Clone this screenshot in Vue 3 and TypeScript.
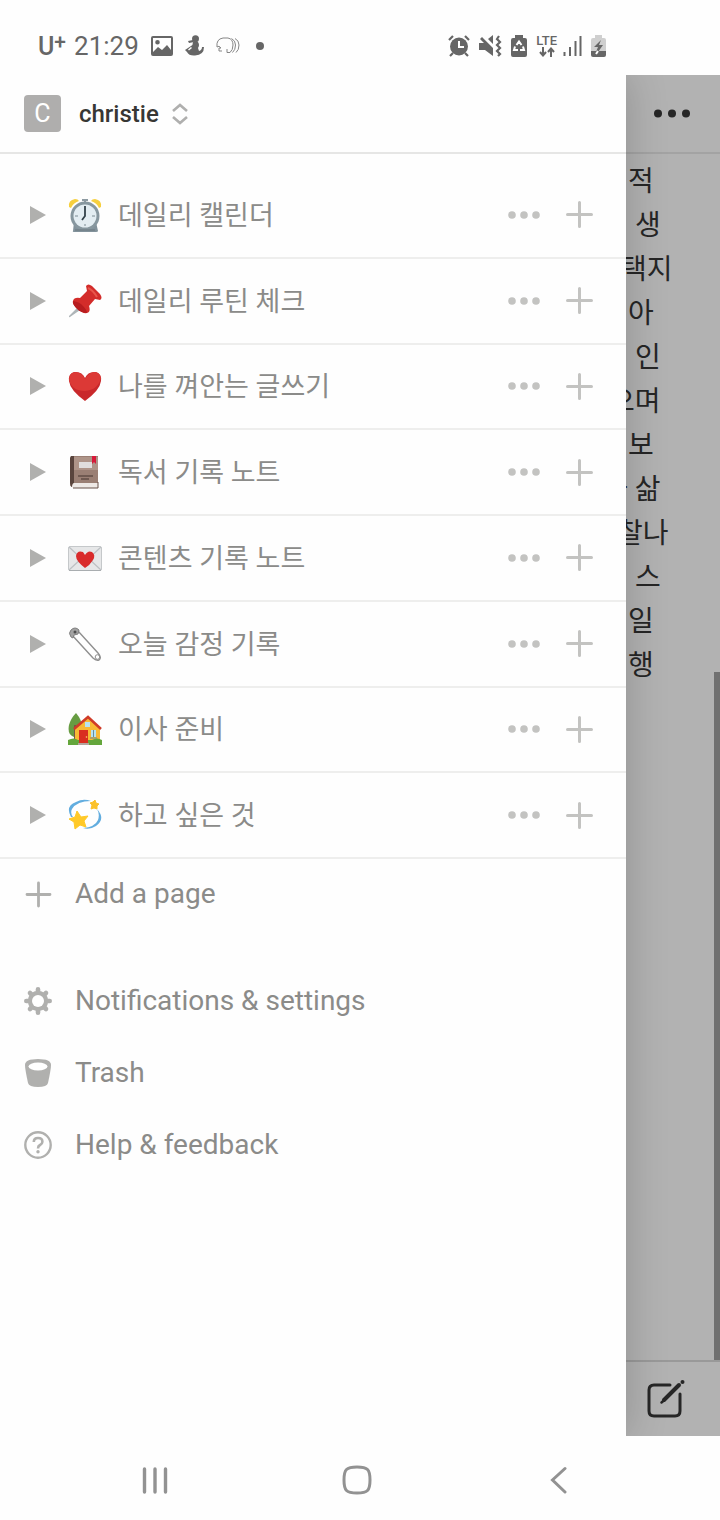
<script setup lang="ts">
type Page = { icon: string; title: string }
type Line = { text: string; shift: number }

const pages: Page[] = [
  { icon: 'clock', title: '데일리 캘린더' },
  { icon: 'pin', title: '데일리 루틴 체크' },
  { icon: 'heart', title: '나를 껴안는 글쓰기' },
  { icon: 'book', title: '독서 기록 노트' },
  { icon: 'letter', title: '콘텐츠 기록 노트' },
  { icon: 'safety-pin', title: '오늘 감정 기록' },
  { icon: 'house', title: '이사 준비' },
  { icon: 'dizzy', title: '하고 싶은 것' },
]

// shift: how far a line runs under the drawer
const lines: Line[] = [
  { text: '적', shift: 0 },
  { text: ' 생', shift: 0 },
  { text: '택지', shift: 7 },
  { text: '아', shift: 0 },
  { text: ' 인', shift: 0 },
  { text: '으며', shift: 19 },
  { text: '보', shift: 0 },
  { text: '과 삶', shift: 26 },
  { text: '찰나', shift: 11 },
  { text: ' 스', shift: 0 },
  { text: '일', shift: 0 },
  { text: '행', shift: 0 },
]
</script>

<template>
  <div class="screen">
    <header class="status">
      <div class="status-left">
        <span class="carrier">U<sup>+</sup></span>
        <time class="time">21:29</time>
        <svg class="s-image" width="22" height="20" viewBox="0 0 22 20">
          <path fill="#666" fill-rule="evenodd" d="M2 0h18a2 2 0 0 1 2 2v16a2 2 0 0 1-2 2H2a2 2 0 0 1-2-2V2a2 2 0 0 1 2-2zM2 2v14l5-5 4 3 5-5 4 5V2zM6.500 4a2.300 2.300 0 1 1 0 4.600a2.300 2.300 0 0 1 0-4.600z" />
        </svg>
        <svg class="s-person" width="19" height="21" viewBox="0 0 19 21">
          <circle cx="10.500" cy="3.700" r="3.500" fill="#666" />
          <path fill="#666" d="m3 6 5-1 1 2-5 1zM8 7h5q2 3 0 6l1 3q3-1 3-4h2q0 8-9 8.500-6 .5-8-3.500l-2-2 6-4q2-1 2-4z" />
          <path d="m3.500 15 3-2.500" stroke="#fff" stroke-width="1.500" />
        </svg>
        <svg class="s-elephant" width="24" height="17" viewBox="0 0 24 17" fill="none" stroke="#858585" stroke-width="1">
          <path d="M1 10q-1-8 6-9h5q5 1 5 7 0 5-3 7.500h-3V12M1 10q2-2 4 1H3v3h3" />
          <path d="M15.500 1.500q4 2 4 6.500 0 5-3 7.500M19 1.500q4 2 4 6.500 0 5-3 7.500" />
        </svg>
        <svg class="s-dot" width="8" height="8" viewBox="0 0 8 8"><circle cx="4" cy="4" r="4" fill="#666" /></svg>
      </div>
      <div class="status-right">
        <svg width="22" height="22" viewBox="0 0 22 22">
          <circle cx="11" cy="11.500" r="9" fill="#666" />
          <path d="M1 5 5 1M21 5l-4-4M5 18l-3 3M17 18l3 3" stroke="#666" stroke-width="2.200" fill="none" />
          <path d="M11 6v6h5" stroke="#fff" stroke-width="2" fill="none" />
        </svg>
        <svg width="23" height="22" viewBox="0 0 23 22">
          <path fill="#666" d="M0 8h6l8 9v4l-8-6H0zM9 4l5-4v9zM3 2 14 13v4L1 4z" />
          <path d="m20 1-2 3 3 3-3 3 3 3-3 3 3 3-2 2" stroke="#666" stroke-width="2.200" fill="none" />
        </svg>
        <svg width="16" height="22" viewBox="0 0 16 22">
          <path fill="#666" d="M4 0h8v3h2q2 0 2 2v15q0 2-2 2H2q-2 0-2-2V5q0-2 2-2h2z" />
          <path d="m5.500 10 2.500-3.500 2.500 3.500M12 11.500l1 3.500H9M7 15H3l1-3.500" stroke="#fff" stroke-width="2" fill="none" />
        </svg>
        <div class="lte">
          <span>LTE</span>
          <svg width="16" height="10" viewBox="0 0 16 10"><path d="M4 0v8M1 5l3 3.500L7 5M12 10V2M9 5l3-3.500L15 5" stroke="#666" stroke-width="2" fill="none" /></svg>
        </div>
        <svg class="s-signal" width="19" height="21" viewBox="0 0 19 21">
          <path d="M1.500 17v4M7 12v9M12.500 6v15M17.500 1v20" stroke="#666" stroke-width="2" />
        </svg>
        <svg width="15" height="22" viewBox="0 0 15 22">
          <path fill="#cfcfcf" d="M4 0h7v3h2q2 0 2 2v11H0V5q0-2 2-2h2z" />
          <path fill="#666" d="M0 16h15v4q0 2-2 2H2q-2 0-2-2z" />
          <path fill="#666" d="M10 5 3 12h4l-2 5h2l5-7H8z" />
          <path d="m5 19 2-3" stroke="#fff" stroke-width="2" />
        </svg>
      </div>
    </header>

    <main class="app">
      <aside class="drawer">
        <button class="workspace" type="button">
          <span class="avatar">C</span>
          <span class="name">christie</span>
          <svg width="16" height="22" viewBox="0 0 16 22" fill="none" stroke="#afafae" stroke-width="2.600"><path d="m1 8 7-6 7 6M1 14l7 6 7-6" /></svg>
        </button>

        <ul class="pages">
          <li v-for="page in pages" :key="page.title" class="page">
            <button class="toggle" type="button" :aria-label="`${page.title} 펼치기`">
              <svg width="16" height="18" viewBox="0 0 16 18"><path d="M0 0v18l16-9z" fill="#b0b0ae" /></svg>
            </button>
            <a class="page-link" href="#">
              <svg class="emoji" width="34" height="34" viewBox="0 0 34 34" aria-hidden="true">
                <g v-if="page.icon === 'clock'">
                  <path d="M6 24h22l2 9q0 1-2 1H6q-2 0-1-1z" fill="#82929b" />
                  <path d="M14 1h6v2h-2v3h-2V3h-2z" fill="#8d9aa1" />
                  <path d="M1 9Q0 2 7 1q3 0 4 2-6 2-8 7zM33 9q1-7-6-8-3 0-4 2 6 2 8 7z" fill="#f6cf3e" />
                  <circle cx="17" cy="18" r="14.500" fill="#87979f" />
                  <circle cx="17" cy="18" r="11.500" fill="#e3edf2" />
                  <path d="M17 8v10l-3 4" fill="none" stroke="#33424a" stroke-width="1.800" />
                  <path d="M7 18h3M24 18h3M17 26v2" stroke="#7b8a92" />
                  <path d="M7 32h20" stroke="#68777e" />
                </g>
                <g v-else-if="page.icon === 'pin'">
                  <path d="m12 21 3 3L2 33q-1 1-1-1z" fill="#aeb5b8" />
                  <path d="M5 17q1-4 7-3l7-7-1-5q2-3 6 0l8 8q3 4 0 6l-5-1-6 7q2 6-2 7-4 1-9-4-6-5-5-8z" fill="#d32c2a" />
                  <path d="M5 17q7 1 10 5 4 4 4 7-6 0-10-4-5-5-4-8z" fill="#b71c1f" />
                  <path d="M20 4q5 2 9 9" fill="none" stroke="#e8564b" stroke-width="2" />
                </g>
                <g v-else-if="page.icon === 'heart'">
                  <path d="M17 32Q2 21 1 12 0 5 6 3q8-1 11 6 3-7 11-6 6 2 5 9-1 9-16 20z" fill="#c9282b" />
                  <path d="M17 22Q4 22 1 11 1 4 7 3q7 0 10 7 4-7 10-7 5 1 6 6-3 12-16 13z" fill="#dc3936" />
                </g>
                <g v-else-if="page.icon === 'book'">
                  <path d="M3 27h27v6H5q-3-2-2-6z" fill="#eee9e6" />
                  <path d="M3 1h27v27H6q-2 0-2 4-2-1-2-4V4z" fill="#9a7f74" />
                  <path d="M3 1h3v27q-2 0-2 4-2-1-2-4V3z" fill="#59443d" />
                  <path d="M6 2h24v13H6z" fill="#ae9488" />
                  <path d="M11 7h13v6H11z" fill="#e0dedd" />
                  <path d="M24 1h4v8l-2-2-2 2z" fill="#d71939" />
                  <path d="M10 21h15M13 24h8" stroke="#624d46" stroke-width="1.500" />
                  <path d="M30 27v6H5" fill="none" stroke="#665049" stroke-width="1" />
                </g>
                <g v-else-if="page.icon === 'letter'">
                  <rect x="0.500" y="5.500" width="33" height="24" rx="1.500" fill="#e6e7e8" stroke="#c5c8ca" />
                  <path d="m1 6 16 15L33 6M1 29l13-12M33 29 20 17" fill="none" stroke="#bdc1c4" stroke-width="1.200" />
                  <path d="M1 29.500h32" stroke="#a9adb0" />
                  <path d="M17 27Q8 20 8 15q1-6 7-4l2 3q3-5 7-3 4 3 1 8-3 5-8 8z" fill="#d92b2b" />
                </g>
                <g v-else-if="page.icon === 'safety-pin'" fill="none">
                  <path d="M10 4 30 26q4 5 1 7-3 1-6-2L4 8" stroke="#8f8f8f" stroke-width="1.400" />
                  <path d="M3 10Q0 6 3 3q4-4 8 0l-1 4-4 1-1 3z" fill="#a3a3a3" stroke="#808080" />
                  <circle cx="7" cy="5" r="1.500" fill="#4f4f4f" />
                  <circle cx="29.500" cy="30" r="2.300" stroke="#8f8f8f" />
                </g>
                <g v-else-if="page.icon === 'house'">
                  <path d="M8 1q6 7 6 14-1 10-8 10-7-2-5-12Q3 6 8 1z" fill="#679c42" />
                  <path d="M7 13v16" stroke="#795548" stroke-width="2" />
                  <path d="M7 16 20 5l12 11v16H7z" fill="#f8b935" />
                  <path d="M6 17 20 5l13 12" fill="none" stroke="#cf3b28" stroke-width="2.500" />
                  <path d="M0 28q6-3 10 0h14q5-3 10 0v5H0z" fill="#64a63c" />
                  <path d="M11 18h9v13h-9z" fill="#d92d20" />
                  <path d="M10 31h11v2H10z" fill="#b3a49e" />
                  <path d="M17 10h5v5h-5zM23 18h5v7h-5z" fill="#b8e3f1" />
                  <path d="M25.500 18v7M22 26h7" stroke="#668c9e" />
                  <circle cx="18.500" cy="25" r="0.800" fill="#ffd66b" />
                </g>
                <g v-else>
                  <path d="M3 19Q-3 8 8 4q7-4 15-1Q9 3 4 11q-2 4 1 8zM29 11q9 10-1 17-6 4-13 2 12-1 15-8 2-6-1-11z" fill="#62addf" />
                  <path d="m9 13 4 6 7-1-4 5 2 6-6-2-5 4-1-7-5-3 6-2z" fill="#ffc928" stroke="#ffc928" stroke-width="1" stroke-linejoin="round" />
                  <path d="m27 2 1 3 3 1-2 2v3l-3-1-3 1 1-4-2-2 3-1z" fill="#fbc12b" stroke="#fbc12b" stroke-linejoin="round" />
                </g>
              </svg>
              <span class="page-title">{{ page.title }}</span>
            </a>
            <button class="icon-button" type="button" :aria-label="`${page.title} 메뉴`">
              <svg width="32" height="8" viewBox="0 0 32 8" fill="#c3c3c1"><circle cx="4" cy="4" r="3.800" /><circle cx="16" cy="4" r="3.800" /><circle cx="28" cy="4" r="3.800" /></svg>
            </button>
            <button class="icon-button" type="button" :aria-label="`${page.title} 하위 페이지 추가`">
              <svg width="27" height="27" viewBox="0 0 27 27"><path d="M13.500 1.500v24M1.500 13.500h24" stroke="#c3c3c1" stroke-width="3" stroke-linecap="round" /></svg>
            </button>
          </li>
        </ul>

        <button class="action add" type="button">
          <svg width="28" height="28" viewBox="0 0 28 28"><path d="M14.500 3v23M3 14.500h23" stroke="#b0b0ae" stroke-width="2.800" stroke-linecap="round" /></svg>
          <span>Add a page</span>
        </button>

        <nav class="links">
          <a class="action" href="#">
            <svg width="28" height="28" viewBox="0 0 28 28">
              <g stroke="#b0b0ae" stroke-width="4.600" stroke-linecap="round">
                <path d="M14 2.300v23.400M2.300 14h23.400" />
                <path d="m6 6 16 16M22 6 6 22" />
              </g>
              <circle cx="14" cy="14" r="10.200" fill="#b0b0ae" />
              <circle cx="14" cy="14" r="6" fill="#fff" />
            </svg>
            <span>Notifications &amp; settings</span>
          </a>
          <a class="action" href="#">
            <svg width="28" height="28" viewBox="0 0 28 28">
              <path d="M1 6Q1 0 14 0t13 6q0 4-3 18-1 4-10 4T4 24Q1 10 1 6z" fill="#b0b0ae" />
              <ellipse cx="14" cy="7.500" rx="9.500" ry="4" fill="#fff" />
            </svg>
            <span>Trash</span>
          </a>
          <a class="action" href="#">
            <svg width="28" height="28" viewBox="0 0 28 28" fill="none" stroke="#b0b0ae" stroke-width="2.400">
              <circle cx="14" cy="14" r="12.700" />
              <path d="M9.800 11q0-4 4.200-4 4.400 0 4.400 3.700 0 2-2.400 3.300-2 1-2 3.500" stroke-width="2.600" />
              <circle cx="14" cy="20.800" r="1.700" fill="#b0b0ae" stroke="none" />
            </svg>
            <span>Help &amp; feedback</span>
          </a>
        </nav>
      </aside>

      <section class="behind">
        <div class="behind-top">
          <button class="plain" type="button" aria-label="More">
            <svg width="36" height="9" viewBox="0 0 36 9" fill="#262626"><circle cx="4" cy="4.500" r="4" /><circle cx="18" cy="4.500" r="4" /><circle cx="32" cy="4.500" r="4" /></svg>
          </button>
        </div>
        <div class="behind-body">
          <p class="note">
            <span v-for="line in lines" :key="line.text" class="line" :style="{ marginLeft: `${-line.shift}px` }">{{ line.text }}</span>
          </p>
          <div class="track"></div>
        </div>
        <div class="behind-bottom">
          <button class="plain" type="button" aria-label="New page">
            <svg width="38" height="38" viewBox="0 0 38 38" fill="none" stroke="#262626" stroke-width="3" stroke-linecap="round">
              <path d="M23 5H7q-5 0-5 5v21q0 5 5 5h21q5 0 5-5V14" />
              <path d="M32 5 17 20" stroke-width="4" />
              <path d="m14.500 22.500 3-2.500" stroke-width="2.500" />
              <circle cx="35.500" cy="2" r="2" fill="#262626" stroke="none" />
            </svg>
          </button>
        </div>
      </section>
    </main>

    <footer class="system-nav">
      <button type="button" aria-label="Recents">
        <svg width="28" height="28" viewBox="0 0 28 28" stroke="#929292" stroke-width="3.400" stroke-linecap="round"><path d="M3.500 3v23M14 3v23M24.500 3v23" /></svg>
      </button>
      <button type="button" aria-label="Home">
        <svg width="30" height="30" viewBox="0 0 30 30" fill="none" stroke="#929292" stroke-width="3"><path d="M15 2q8 0 10.500 2.500T28 15t-2.500 10.500T15 28 4.500 25.500 2 15 4.500 4.500 15 2z" /></svg>
      </button>
      <button type="button" aria-label="Back">
        <svg width="28" height="28" viewBox="0 0 28 28" fill="none" stroke="#929292" stroke-width="3" stroke-linecap="round"><path d="M20 2.500 7.500 14 20 26" /></svg>
      </button>
    </footer>
  </div>
</template>

<style>
body {
  margin: 0;
}
</style>

<style scoped>
.screen {
  display: grid;
  grid-template-rows: auto 1fr auto;
  min-height: 100vh;
  background: #fefefe;
  color: #8b8b89;
  font-family: Roboto, "Noto Sans CJK KR", sans-serif;
  font-size: 27px;
}
svg {
  display: block;
  flex: none;
}
button {
  padding: 0;
  border: 0;
  background: none;
  color: inherit;
  font: inherit;
}
a {
  color: inherit;
  text-decoration: none;
}
.status {
  display: flex;
  justify-content: space-between;
  align-items: center;
  box-sizing: border-box;
  min-height: 75px;
  padding: 16px 114px 0 38px;
  color: #666;
}
.status-left,
.status-right {
  display: flex;
  align-items: center;
}
.status-left {
  gap: 12px;
}
.status-right {
  gap: 9px;
}
.carrier {
  display: flex;
  margin-right: -4px;
  padding-top: 2px;
  font-size: 25px;
  line-height: 28px;
  font-weight: 500;
}
.carrier sup {
  font-size: 21px;
  line-height: 18px;
  font-weight: 500;
}
.time {
  font-size: 26px;
  line-height: 28px;
}
.s-dot {
  margin-left: 4px;
}
.s-signal {
  margin-left: -3px;
}
.lte {
  display: flex;
  flex-direction: column;
  align-items: center;
  font-size: 13px;
  line-height: 13px;
  font-weight: 500;
}
.app {
  display: grid;
  grid-template-columns: 626fr 94fr;
  overflow: hidden;
}
.drawer {
  z-index: 1;
  display: flex;
  flex-direction: column;
  background: #fefefe;
  box-shadow: 0 0 40px rgba(0, 0, 0, 0.2);
}
.workspace {
  display: flex;
  align-items: center;
  box-sizing: border-box;
  min-height: 79px;
  padding: 0 24px;
  border-bottom: 2px solid #e6e6e5;
}
.avatar {
  width: 37px;
  border-radius: 4px;
  background: #afaead;
  color: #fff;
  font-size: 25px;
  line-height: 37px;
  text-align: center;
}
.name {
  margin: 0 13px 0 18px;
  color: #373734;
  font-size: 24px;
  line-height: 32px;
  font-weight: 500;
}
.pages {
  display: grid;
  grid-auto-rows: 1fr;
  min-height: 686px;
  margin: 19px 0 0;
  padding: 0;
  list-style: none;
}
.page {
  display: flex;
  align-items: center;
  gap: 26px;
  padding: 0 33px 0 30px;
  border-bottom: 2px solid #eeeeed;
}
.page-link {
  display: flex;
  flex: 1;
  align-items: center;
  gap: 16px;
  margin-left: -4px;
  line-height: 36px;
  white-space: nowrap;
}
.page-title {
  padding-top: 2px;
}
.action {
  display: flex;
  align-items: center;
  gap: 23px;
  min-height: 72px;
  padding: 0 24px;
  font-size: 28px;
  line-height: 36px;
}
.add {
  min-height: 70px;
}
.links {
  margin-top: 36px;
}
.behind {
  display: flex;
  flex-direction: column;
  min-width: 0;
  background: #b2b2b2;
  color: #262626;
}
.behind-top,
.behind-bottom {
  display: flex;
  align-items: center;
  box-sizing: border-box;
}
.behind-top {
  min-height: 79px;
  padding-left: 28px;
  border-bottom: 2px solid #a3a3a3;
}
.behind-body {
  display: flex;
  flex: 1;
  justify-content: space-between;
}
.behind-bottom {
  min-height: 76px;
  padding-left: 21px;
  border-top: 2px solid #999;
}
.note {
  margin: 6px 0 0 2px;
  font-size: 28px;
  line-height: 44px;
}
.line {
  display: block;
  white-space: pre;
}
.track {
  width: 6px;
  margin-top: 518px;
  background: #707070;
}
.system-nav {
  display: grid;
  grid-template-columns: repeat(3, 1fr);
  align-items: center;
  box-sizing: border-box;
  min-height: 84px;
  padding: 4px 60px 0 54px;
}
.system-nav button {
  display: flex;
  justify-content: center;
}
</style>
